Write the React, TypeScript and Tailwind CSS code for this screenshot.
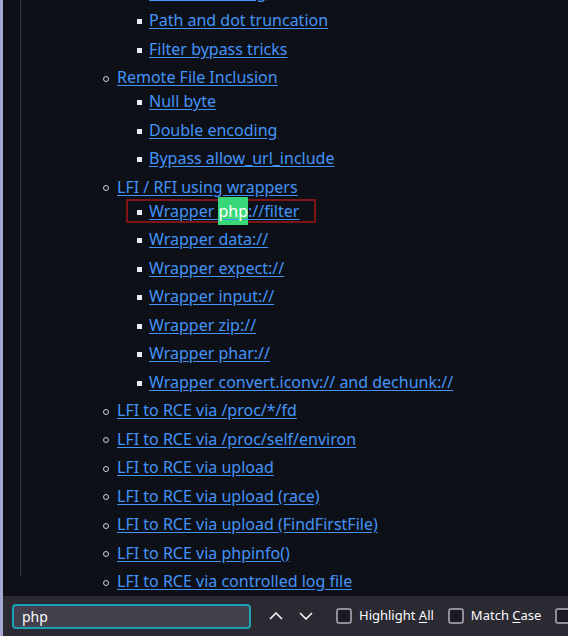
type Item = { text: string; level: 2 | 3; hit?: boolean };

const items: Item[] = [
  { text: "UTF-8 encoding", level: 3 },
  { text: "Path and dot truncation", level: 3 },
  { text: "Filter bypass tricks", level: 3 },
  { text: "Remote File Inclusion", level: 2 },
  { text: "Null byte", level: 3 },
  { text: "Double encoding", level: 3 },
  { text: "Bypass allow_url_include", level: 3 },
  { text: "LFI / RFI using wrappers", level: 2 },
  { text: "Wrapper php://filter", level: 3, hit: true },
  { text: "Wrapper data://", level: 3 },
  { text: "Wrapper expect://", level: 3 },
  { text: "Wrapper input://", level: 3 },
  { text: "Wrapper zip://", level: 3 },
  { text: "Wrapper phar://", level: 3 },
  { text: "Wrapper convert.iconv:// and dechunk://", level: 3 },
  { text: "LFI to RCE via /proc/*/fd", level: 2 },
  { text: "LFI to RCE via /proc/self/environ", level: 2 },
  { text: "LFI to RCE via upload", level: 2 },
  { text: "LFI to RCE via upload (race)", level: 2 },
  { text: "LFI to RCE via upload (FindFirstFile)", level: 2 },
  { text: "LFI to RCE via phpinfo()", level: 2 },
  { text: "LFI to RCE via controlled log file", level: 2 },
];

const Link = ({ text, hit }: { text: string; hit?: boolean }) => {
  if (!hit) return <a className="text-[#4493f8] underline underline-offset-2">{text}</a>;
  return (
    <a className="text-[#4493f8] underline underline-offset-2">
      Wrapper <span className="bg-[#38d878] text-white py-[3px]">php</span>://filter
    </a>
  );
};

const Row = ({ item, first }: { item: Item; first: boolean }) => {
  const gap = first ? "" : "mt-[4.5px]";
  if (item.level === 2) {
    return (
      <li className={`flex items-center h-6 pl-[82px] ${gap}`}>
        <span className="w-[14px] flex pt-[3px]">
          <span className="w-[6px] h-[6px] rounded-full border border-[#c9d1d9]" />
        </span>
        <Link text={item.text} />
      </li>
    );
  }
  return (
    <li className={`flex h-6 pl-[105px] ${gap}`}>
      <span
        className={`inline-flex items-center h-6 pl-[9px] pr-[15px] border-2 ${
          item.hit ? "border-[#7f1414]" : "border-transparent"
        }`}
      >
        <span className="w-[12px] flex pt-[3px]">
          <span className="w-[5px] h-[5px] bg-[#e6edf3]" />
        </span>
        <Link text={item.text} hit={item.hit} />
      </span>
    </li>
  );
};

const Chevron = ({ down }: { down?: boolean }) => (
  <svg width="14" height="8" viewBox="0 0 14 8" fill="none" stroke="#fbfbfe" strokeWidth="1.5">
    <polyline points={down ? "1,1 7,7 13,1" : "1,7 7,1 13,7"} />
  </svg>
);

const Check = ({ label }: { label?: [string, string, string] }) => (
  <div className="flex items-center gap-[7px] shrink-0">
    <span className="w-4 h-4 rounded-[3px] border-2 border-[#8f8f9d] bg-[#1c1b22]" />
    {label && (
      <span className="text-[13px] text-[#fbfbfe]">
        {label[0]}
        <span className="underline underline-offset-2">{label[1]}</span>
        {label[2]}
      </span>
    )}
  </div>
);

export default function App() {
  return (
    <div
      className="w-[568px] h-[636px] flex overflow-hidden bg-[#0d1117]"
      style={{ fontFamily: '"Noto Sans", sans-serif' }}
    >
      <div className="w-[3px] bg-[#a3a8d4] shrink-0" />
      <div className="flex-1 flex flex-col min-w-0">
        <div className="h-[596px] overflow-hidden">
          <div className="ml-[17px] border-l border-[#30363d] h-full">
            <ul className="-mt-[25px] text-[16px] leading-6">
              {items.map((it, i) => (
                <Row key={i} item={it} first={i > 0 && items[i - 1].level === 2 && it.level === 3} />
              ))}
            </ul>
          </div>
        </div>
        <div className="flex-1 bg-[#2b2a33] flex items-center pl-[9px]">
          <div className="w-[239px] h-[25px] shrink-0 rounded-[4px] border-2 border-[#1ba2b2] bg-[#42414d] flex items-center pl-[8px] text-[14px] text-[#fbfbfe]">
            php
          </div>
          <div className="flex items-center ml-[18px] gap-[16px]">
            <Chevron />
            <Chevron down />
          </div>
          <div className="ml-[23px] flex items-center gap-[14px]">
            <Check label={["Highlight ", "A", "ll"]} />
            <Check label={["Match ", "C", "ase"]} />
            <Check />
          </div>
        </div>
      </div>
    </div>
  );
}
